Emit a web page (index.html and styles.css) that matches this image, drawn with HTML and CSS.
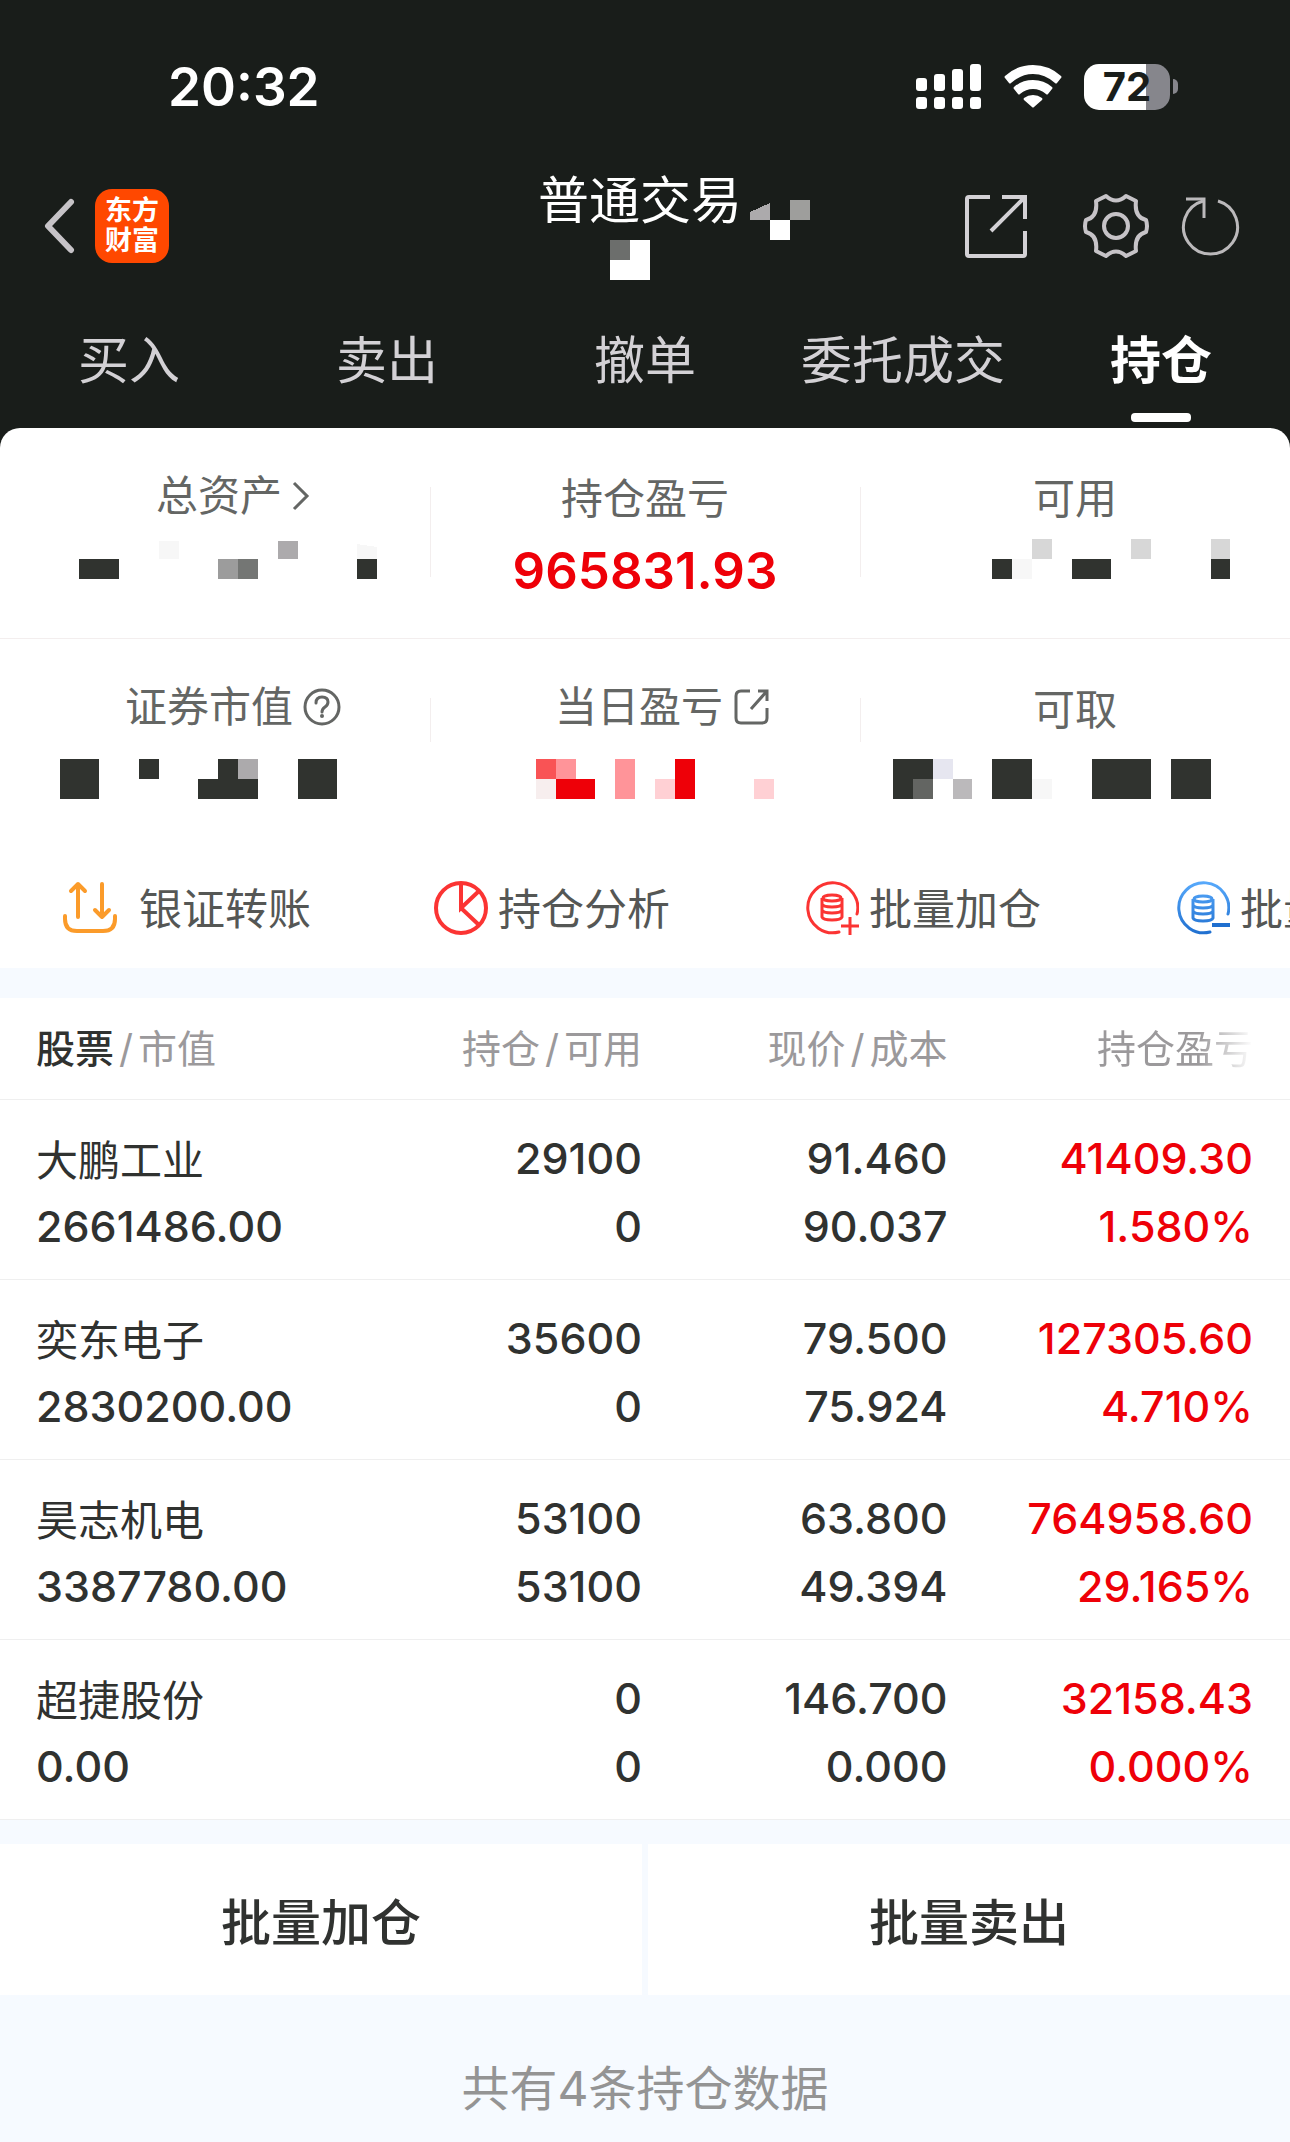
FILE: index.html
```html
<!DOCTYPE html>
<html lang="zh-CN">

<head>
    <meta charset="utf-8" />
    <meta name="viewport" content="width=device-width, initial-scale=1.0">
    <title>普通交易 - 持仓</title>
    <link rel="stylesheet" href="styles.css">
</head>

<body>
    <header class="top">
        <div class="status">
            <span class="time">20:32</span>
            <div class="status-icons">
                <svg class="signal" width="65" height="46" viewBox="0 0 65 46" fill="#fff">
                    <rect x="0" y="14" width="11" height="13" rx="3" />
                    <rect x="18" y="10" width="11" height="17" rx="3" />
                    <rect x="36" y="5" width="11" height="22" rx="3" />
                    <rect x="54" y="0" width="11" height="27" rx="3" />
                    <rect x="0" y="33" width="11" height="12" rx="3" />
                    <rect x="18" y="33" width="11" height="12" rx="3" />
                    <rect x="36" y="33" width="11" height="12" rx="3" />
                    <rect x="54" y="33" width="11" height="12" rx="3" />
                </svg>
                <svg class="wifi" width="58" height="46" viewBox="0 0 58 46" fill="#fff">
                    <path d="M1 14 Q0 13 1 12 Q13 1 29 1 Q45 1 57 12 Q58 13 57 14 L53 19 Q52 20 51 19 Q41 10 29 10 Q17 10 7 19 Q6 20 5 19Z" />
                    <path d="M10 25 Q9 24 10 23 Q18 16 29 16 Q40 16 48 23 Q49 24 48 25 L44 30 Q43 31 42 30 Q36 25 29 25 Q22 25 16 30 Q15 31 14 30Z" />
                    <path d="M20 36 Q19 35 20 34 Q24 31 29 31 Q34 31 38 34 Q39 35 38 36 L30 43 Q29 44 28 43Z" />
                </svg>
                <div class="battery"><span>72</span></div>
            </div>
        </div>

        <div class="nav">
            <div class="nav-left">
                <button class="icon-btn" aria-label="返回">
                    <svg width="32" height="56" viewBox="0 0 32 56" fill="none" stroke="#c6c3c7" stroke-width="6" stroke-linecap="round" stroke-linejoin="round">
                        <path d="M28 4 L5 28 L28 52" />
                    </svg>
                </button>
                <div class="logo"><span>东方</span><span>财富</span></div>
            </div>
            <div class="nav-title">
                <div class="title-line">
                    <h1>普通交易</h1>
                    <svg width="60" height="40" viewBox="0 0 60 40" shape-rendering="crispEdges">
                        <path d="M0 12 L20 3 V20 H0Z" fill="#acaaac" />
                        <rect x="20" y="20" width="20" height="20" fill="#fff" />
                        <rect x="40" y="0" width="20" height="20" fill="#9e9e9c" />
                    </svg>
                </div>
                <svg class="account" width="40" height="40" viewBox="0 0 40 40" shape-rendering="crispEdges">
                    <rect width="40" height="40" fill="#fff" />
                    <rect width="20" height="20" fill="#6c6e6c" />
                </svg>
            </div>
            <div class="nav-right">
                <button class="icon-btn" aria-label="分享">
                    <svg width="66" height="66" viewBox="0 0 66 66" fill="none" stroke="#d3d1d5" stroke-width="4">
                        <path d="M27 4 H6 Q4 4 4 6 V61 Q4 63 6 63 H60 Q62 63 62 61 V38" />
                        <path d="M39 4 H62 V26 M62 4 L28 38" />
                    </svg>
                </button>
                <button class="icon-btn" aria-label="设置">
                    <svg width="66" height="66" viewBox="0 0 66 66" fill="none" stroke="#c6c3c7" stroke-width="4" stroke-linejoin="round">
                        <path d="M23 3 Q33 12 43 3 L53 8 Q51 24 63 27 Q65 33 63 39 Q51 42 53 58 L43 63 Q33 54 23 63 L13 58 Q15 42 3 39 Q1 33 3 27 Q15 24 13 8Z" />
                        <circle cx="33" cy="33" r="12" />
                    </svg>
                </button>
                <button class="icon-btn" aria-label="刷新">
                    <svg width="60" height="60" viewBox="0 0 60 60" fill="none" stroke="#bbb9bb" stroke-width="3">
                        <path d="M37 5 A27 27 0 1 1 22 5" />
                        <path d="M5 3 H23 V22" />
                    </svg>
                </button>
            </div>
        </div>

        <nav class="tabs">
            <a href="#">买入</a>
            <a href="#">卖出</a>
            <a href="#">撤单</a>
            <a href="#">委托成交</a>
            <a href="#" class="active">持仓</a>
        </nav>
    </header>

    <main>
        <section class="assets">
            <div class="assets-row">
                <div class="asset">
                    <div class="asset-label with-icon">总资产
                        <svg class="chevron" width="18" height="30" viewBox="0 0 18 30" fill="none" stroke="#646664" stroke-width="3">
                            <path d="M2 2 L15 15 L2 28" />
                        </svg>
                    </div>
                    <svg class="masked" width="430" height="40" viewBox="0 0 430 40" shape-rendering="crispEdges">
                        <path d="M79 20h40v20h-40z M357 20h20v20h-20z" fill="#30332f" />
                        <path d="M159 2h20v18h-20z M357 5l20 3v12h-20z" fill="#f7f7f7" />
                        <path d="M218 20h20v20h-20z" fill="#9c9c9c" />
                        <path d="M238 20h20v20h-20z" fill="#747674" />
                        <path d="M278 2h20v18h-20z" fill="#acaaac" />
                    </svg>
                </div>
                <div class="asset">
                    <div class="asset-label">持仓盈亏</div>
                    <div class="asset-value">965831.93</div>
                </div>
                <div class="asset">
                    <div class="asset-label">可用</div>
                    <svg class="masked" width="430" height="40" viewBox="0 0 430 40" shape-rendering="crispEdges">
                        <path d="M132 20h20v20h-20z M212 20h39v20h-39z M351 20h19v20h-19z" fill="#30332f" />
                        <path d="M152 20h20v20h-20z" fill="#f7f7f7" />
                        <path d="M172 0h20v20h-20z M271 0h20v20h-20z M351 0h19v20h-19z" fill="#d7d7d7" />
                    </svg>
                </div>
            </div>
            <div class="assets-row">
                <div class="asset">
                    <div class="asset-label with-icon">证券市值
                        <svg width="38" height="38" viewBox="0 0 38 38" fill="none" stroke="#646664" stroke-width="3">
                            <circle cx="19" cy="19" r="17" />
                            <path d="M13 15 Q13 9 19 9 Q25 9 25 14 Q25 17 22 19 Q19 21 19 24" stroke-linecap="round" />
                            <circle cx="19" cy="28" r="2" fill="#646664" stroke="none" />
                        </svg>
                    </div>
                    <svg class="masked" width="430" height="40" viewBox="0 0 430 40" shape-rendering="crispEdges">
                        <path d="M60 0h39v40h-39z M139 0h20v20h-20z M218 0h20v20h20v20h-60v-20h20z M298 0h39v40h-39z" fill="#30332f" />
                        <path d="M238 0h20v20h-20z" fill="#acaaac" />
                    </svg>
                </div>
                <div class="asset">
                    <div class="asset-label with-icon">当日盈亏
                        <svg width="38" height="38" viewBox="0 0 38 38" fill="none" stroke="#646664" stroke-width="3">
                            <path d="M17 3 H8 Q3 3 3 8 V30 Q3 35 8 35 H29 Q34 35 34 30 V20" />
                            <path d="M25 3 H34 V13 M34 3 L18 21" />
                        </svg>
                    </div>
                    <svg class="masked" width="430" height="40" viewBox="0 0 430 40" shape-rendering="crispEdges">
                        <path d="M106 0h20v20h-20z" fill="#f95355" />
                        <path d="M126 0h20v20h-20z M185 0h20v40h-20z" fill="#ff9499" />
                        <path d="M106 20h20v20h-20z" fill="#f7eeee" />
                        <path d="M126 20h39v20h-39z M245 0h20v40h-20z" fill="#ee0008" />
                        <path d="M225 20h20v20h-20z M324 20h20v20h-20z" fill="#ffd0d4" />
                    </svg>
                </div>
                <div class="asset">
                    <div class="asset-label">可取</div>
                    <svg class="masked" width="430" height="40" viewBox="0 0 430 40" shape-rendering="crispEdges">
                        <path d="M33 0h40v20h-20v20h-20z M132 0h40v40h-40z M232 0h59v40h-59z M311 0h40v40h-40z" fill="#30332f" />
                        <path d="M53 20h20v20h-20z" fill="#636562" />
                        <path d="M73 0h20v20h-20z" fill="#e6e6f0" />
                        <path d="M93 20h19v20h-19z" fill="#bbb9bb" />
                        <path d="M172 20h20v20h-20z" fill="#f7f7f7" />
                    </svg>
                </div>
            </div>
        </section>

        <section class="actions">
            <a href="#" class="wide">
                <svg width="54" height="54" viewBox="0 0 54 54" fill="none" stroke="#fb9b2a" stroke-width="4" stroke-linecap="round" stroke-linejoin="round">
                    <path d="M2 35 V38 Q2 50 14 50 H40 Q52 50 52 38 V35" />
                    <path d="M15 36 V3 M8 10 L15 3 L22 10" />
                    <path d="M39 3 V36 M32 29 L39 36 L46 29" />
                </svg>
                <span>银证转账</span>
            </a>
            <a href="#">
                <svg width="54" height="54" viewBox="0 0 54 54" fill="none" stroke="#fb3433" stroke-width="4">
                    <circle cx="27" cy="27" r="25" />
                    <path d="M27 2 V27 L45 10 M27 27 L45 44" />
                </svg>
                <span>持仓分析</span>
            </a>
            <a href="#">
                <svg width="54" height="54" viewBox="0 0 54 54" fill="none" stroke="#fb3433" stroke-width="3">
                    <path d="M52 33 A25 25 0 1 0 34 51" stroke-linecap="round" />
                    <ellipse cx="27" cy="17" rx="9" ry="3" />
                    <path d="M17 17 V36 Q18 39 27 39 Q36 39 37 36 V17 M17 23 Q18 26 27 26 Q36 26 37 23 M17 29 Q18 32 27 32 Q36 32 37 29" />
                    <path d="M36 45 H54 M45 36 V54" />
                </svg>
                <span>批量加仓</span>
            </a>
            <a href="#">
                <svg width="54" height="54" viewBox="0 0 54 54" fill="none" stroke="url(#blue)" stroke-width="3">
                    <defs>
                        <linearGradient id="blue" gradientUnits="userSpaceOnUse" x1="0" y1="0" x2="0" y2="54">
                            <stop offset="0" stop-color="#58aafc" />
                            <stop offset="1" stop-color="#1f6fcf" />
                        </linearGradient>
                    </defs>
                    <path d="M52 33 A25 25 0 1 0 34 51" stroke-linecap="round" />
                    <ellipse cx="27" cy="18" rx="9" ry="3" />
                    <path d="M17 18 V37 Q18 40 27 40 Q36 40 37 37 V18 M17 24 Q18 27 27 27 Q36 27 37 24 M17 30 Q18 33 27 33 Q36 33 37 30" />
                    <rect x="36" y="42" width="18" height="4" fill="#1f6fcf" stroke="none" />
                </svg>
                <span>批量卖出</span>
            </a>
        </section>

        <table class="holdings">
            <thead>
                <tr>
                    <th><b>股票</b><i>/</i>市值</th>
                    <th>持仓<i>/</i>可用</th>
                    <th>现价<i>/</i>成本</th>
                    <th><span class="fade">持仓盈亏</span></th>
                </tr>
            </thead>
            <tbody>
                <tr>
                    <td><span class="name">大鹏工业</span>2661486.00</td>
                    <td><span>29100</span>0</td>
                    <td><span>91.460</span>90.037</td>
                    <td><span>41409.30</span>1.580%</td>
                </tr>
                <tr>
                    <td><span class="name">奕东电子</span>2830200.00</td>
                    <td><span>35600</span>0</td>
                    <td><span>79.500</span>75.924</td>
                    <td><span>127305.60</span>4.710%</td>
                </tr>
                <tr>
                    <td><span class="name">昊志机电</span>3387780.00</td>
                    <td><span>53100</span>53100</td>
                    <td><span>63.800</span>49.394</td>
                    <td><span>764958.60</span>29.165%</td>
                </tr>
                <tr>
                    <td><span class="name">超捷股份</span>0.00</td>
                    <td><span>0</span>0</td>
                    <td><span>146.700</span>0.000</td>
                    <td><span>32158.43</span>0.000%</td>
                </tr>
            </tbody>
        </table>

        <div class="batch">
            <button>批量加仓</button>
            <button>批量卖出</button>
        </div>

        <p class="total">共有4条持仓数据</p>
    </main>
</body>

</html>
```
FILE: styles.css
```css
* {
    box-sizing: border-box;
}

body {
    margin: 0;
    background-color: #f6faff;
    color: #303230;
    font-family: Inter, "Noto Sans CJK SC", sans-serif;
    overflow-x: hidden;
}

a {
    color: inherit;
    text-decoration: none;
}

button {
    border: none;
    padding: 0;
    color: inherit;
    font-family: inherit;
    cursor: pointer;
}

svg {
    display: block;
    flex: none;
}

/* Header */
.top {
    background-color: #191d1a;
    color: #fff;
    padding: 56px 0 24px;
}

.status {
    display: flex;
    justify-content: space-between;
    align-items: center;
    height: 62px;
    padding: 0 112px 0 168px;
}

.time {
    font-size: 53px;
    font-weight: 600;
}

.status-icons {
    display: flex;
    align-items: center;
}

.wifi {
    margin: 0 22px 0 23px;
}

.battery {
    position: relative;
    width: 86px;
    height: 46px;
    margin-right: 8px;
    border-radius: 15px;
    background: linear-gradient(to right, #fff 72%, #86868c 72%);
    color: #191d1a;
    font-size: 40px;
    font-weight: 700;
    line-height: 46px;
    text-align: center;
}

/* Battery tip */
.battery::after {
    content: "";
    position: absolute;
    top: 15px;
    right: -8px;
    width: 5px;
    height: 15px;
    border-radius: 0 5px 5px 0;
    background-color: #86868c;
}

.nav {
    display: grid;
    grid-template-columns: 1fr auto 1fr;
    align-items: center;
    height: 200px;
    padding: 16px 49px 0 43px;
}

.nav-left,
.nav-right {
    display: flex;
    align-items: center;
}

.nav-left {
    gap: 20px;
}

.nav-right {
    justify-content: flex-end;
}

.icon-btn {
    background: none;
}

.nav-right .icon-btn:nth-child(2) {
    margin: 0 32px 0 54px;
}

.logo {
    display: flex;
    flex-direction: column;
    align-items: center;
    justify-content: center;
    width: 74px;
    height: 74px;
    border-radius: 17px;
    background-color: #ff4800;
    font-size: 27px;
    font-weight: 700;
    line-height: 30px;
}

.nav-title {
    display: flex;
    flex-direction: column;
    align-items: center;
    margin: 0 0 10px 64px;
}

.title-line {
    display: flex;
    align-items: flex-end;
    gap: 8px;
}

h1 {
    margin: 0;
    font-size: 51px;
    font-weight: 400;
    line-height: 78px;
}

.account {
    margin-right: 88px;
}

.tabs {
    display: flex;
    height: 86px;
    font-size: 51px;
    line-height: 86px;
    color: #d3d1d5;
}

.tabs a {
    flex: 1;
    text-align: center;
}

.tabs .active {
    position: relative;
    color: #fff;
    font-weight: 700;
}

.tabs .active::after {
    content: "";
    position: absolute;
    left: 50%;
    bottom: -18px;
    width: 60px;
    height: 9px;
    margin-left: -30px;
    border-radius: 4px;
    background-color: #fff;
}

/* Assets */
.assets {
    border-radius: 20px 20px 0 0;
    background-color: #fff;
}

main {
    background: linear-gradient(#191d1a 20px, transparent 20px);
}

.assets-row {
    display: flex;
    height: 211px;
    padding-top: 37px;
}

.assets-row:first-child {
    border-bottom: 1px solid #f3eeee;
}

.asset {
    position: relative;
    flex: 1;
    display: flex;
    flex-direction: column;
    align-items: center;
}

.asset + .asset::before {
    content: "";
    position: absolute;
    left: 0;
    top: 22px;
    width: 1px;
    height: 90px;
    background-color: #f3eeee;
}

.assets-row + .assets-row .asset::before {
    height: 44px;
}

.asset-label {
    display: flex;
    align-items: center;
    gap: 10px;
    color: #646664;
    font-size: 42px;
    line-height: 68px;
}

.with-icon {
    margin-bottom: 6px;
    padding-left: 36px;
    line-height: 62px;
}

.asset-value {
    margin-top: 6px;
    color: #ee0008;
    font-size: 51px;
    font-weight: 600;
    line-height: 64px;
}

.masked {
    margin-top: 6px;
}

.assets-row + .assets-row .masked {
    margin-top: 15px;
}

/* Shortcuts */
.actions {
    display: flex;
    height: 118px;
    padding: 28px 0 0 63px;
    background-color: #fff;
    overflow: hidden;
}

.actions a {
    flex: none;
    display: flex;
    align-items: center;
    gap: 10px;
    width: 371px;
    height: 60px;
    color: #555755;
    font-size: 43px;
    white-space: nowrap;
}

.actions span {
    padding-bottom: 4px;
}

.actions .wide {
    gap: 22px;
}

/* Holdings */
.holdings {
    width: 100%;
    margin-top: 30px;
    border-collapse: collapse;
    table-layout: fixed;
    background-color: #fff;
    text-align: right;
}

th,
td {
    padding: 6px 3px 0 36px;
    border-bottom: 1px solid #efefef;
}

th {
    height: 101px;
    padding-top: 0;
    padding-bottom: 4px;
    color: #9b999b;
    font-size: 39px;
    font-weight: 400;
    text-align: right;
}

th:first-child,
td:first-child {
    width: 28%;
    text-align: left;
}

th:nth-child(2) {
    width: 22%;
}

th:nth-child(3) {
    width: 24%;
}

th:nth-child(3),
td:nth-child(3) {
    padding-right: 7px;
}

th:last-child,
td:last-child {
    padding-right: 37px;
}

th b {
    color: #303230;
    font-weight: 500;
}

th i {
    margin: 0 5px;
    font-style: normal;
}

.fade {
    background: linear-gradient(to right, #9b999b 65%, #fff);
    background-clip: text;
    color: transparent;
}

td {
    height: 180px;
    font-size: 43px;
    font-weight: 500;
    line-height: 68px;
}

td span {
    display: block;
}

td .name {
    padding-top: 6px;
    font-size: 42px;
    font-weight: 400;
    line-height: 62px;
}

td:last-child {
    color: #ee0008;
}

/* Bottom buttons */
.batch {
    display: flex;
    gap: 6px;
    margin-top: 24px;
}

.batch button {
    flex: 1;
    height: 151px;
    background-color: #fff;
    font-size: 50px;
    font-weight: 500;
}

.total {
    margin: 0;
    padding: 58px 0 18px;
    color: #949494;
    font-size: 48px;
    line-height: 72px;
    text-align: center;
}
```
